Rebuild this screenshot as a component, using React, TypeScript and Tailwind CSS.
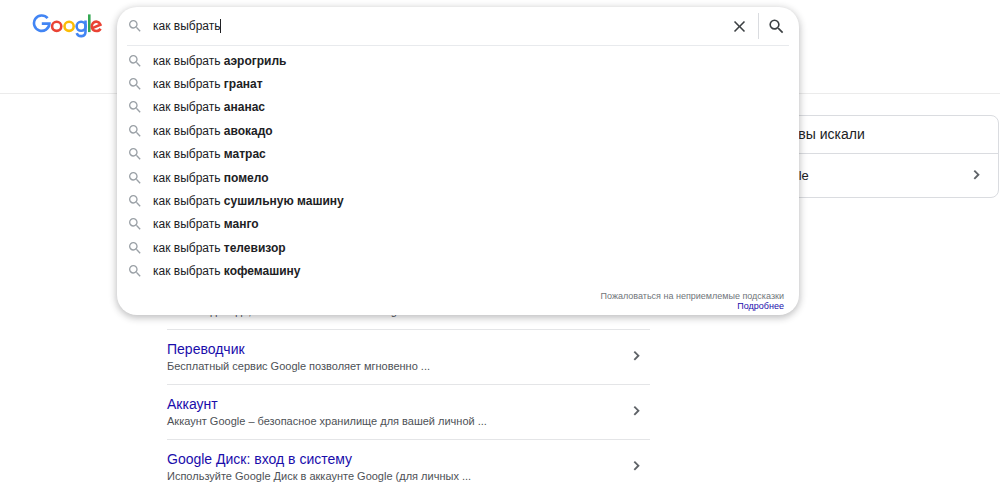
import React from "react";

const suggestions = [
  "аэрогриль",
  "гранат",
  "ананас",
  "авокадо",
  "матрас",
  "помело",
  "сушильную машину",
  "манго",
  "телевизор",
  "кофемашину",
];

const siteLinks = [
  { title: "Погода", text: "Вся погода года, новости и все места в Google ..." },
  { title: "Переводчик", text: "Бесплатный сервис Google позволяет мгновенно ..." },
  { title: "Аккаунт", text: "Аккаунт Google – безопасное хранилище для вашей личной ..." },
  { title: "Google Диск: вход в систему", text: "Используйте Google Диск в аккаунте Google (для личных ..." },
];

function SearchIcon({ className }: { className: string }) {
  return (
    <svg viewBox="0 0 24 24" className={className} fill="currentColor" aria-hidden="true">
      <path d="M15.5 14h-.79l-.28-.27A6.47 6.47 0 0 0 16 9.5 6.5 6.5 0 1 0 9.5 16c1.61 0 3.09-.59 4.23-1.57l.27.28v.79l5 4.99L20.49 19l-4.99-5zm-6 0C7.01 14 5 11.99 5 9.5S7.01 5 9.5 5 14 7.01 14 9.5 11.99 14 9.5 14z" />
    </svg>
  );
}

function CloseIcon() {
  return (
    <svg viewBox="0 0 24 24" className="size-[19px]" fill="currentColor" aria-hidden="true">
      <path d="M19 6.41L17.59 5 12 10.59 6.41 5 5 6.41 10.59 12 5 17.59 6.41 19 12 13.41 17.59 19 19 17.59 13.41 12z" />
    </svg>
  );
}

function Chevron() {
  return (
    <svg viewBox="0 0 18 18" className="size-[18px] shrink-0 text-[#5f6368]" fill="none" stroke="currentColor" strokeWidth="1.9" aria-hidden="true">
      <path d="M6.3 3.6 10.4 7.7 6.3 11.8" />
    </svg>
  );
}

function Logo() {
  return (
    <svg viewBox="0 0 70 24" className="h-6 w-[70px]" fill="none" strokeWidth="2.6" role="img" aria-label="Google">
      <path d="M15.6 4.2A7.7 7.7 0 1 0 17.4 9.6H9.8" stroke="#4285f4" />
      <circle cx="24.7" cy="12.3" r="4.6" stroke="#ea4335" />
      <circle cx="37.1" cy="12.3" r="4.6" stroke="#fbbc05" />
      <path d="M53.5 6.6v10.8c0 6-7.2 6-8.8 1.7" stroke="#4285f4" />
      <circle cx="49.1" cy="12.3" r="4.5" stroke="#4285f4" />
      <path d="M57.3 0.4v17.7" stroke="#34a853" />
      <path d="M60.3 14.1l8.1-3.4c-1.3-3.6-5.3-4-7.4-1.5-2.2 2.7-1.3 7.8 3.4 7.8 2.1 0 3.4-1 4.2-2.3" stroke="#ea4335" />
    </svg>
  );
}

export default function App() {
  return (
    <div className="relative min-h-screen bg-white font-['Liberation_Sans',Arial,sans-serif] text-[#202124]">
      <header className="flex h-[94px] items-start border-b border-[#ebebeb] pt-[14px] pl-8">
        <a href="#" aria-label="Google">
          <Logo />
        </a>
      </header>

      <main className="flex items-start pt-[21px] pr-px pl-[167px]">
        <section className="w-[483px] shrink-0 pt-40">
          <ul>
            {siteLinks.map((link) => (
              <li key={link.title} className="flex h-[55px] items-center justify-between border-b border-[#e4e5e7] pr-1">
                <div>
                  <a href="#" className="block text-sm leading-[18px] text-[#1a0dab]">{link.title}</a>
                  <p className="text-[11px] leading-4 text-[#4d5156]">{link.text}</p>
                </div>
                <Chevron />
              </li>
            ))}
          </ul>
        </section>

        <aside className="ml-[60px] flex-1 rounded-lg border border-[#dadce0]">
          <h2 className="border-b border-[#dadce0] px-[14px] text-sm leading-[37px]">Возможно, вы искали</h2>
          <a href="#" className="flex h-[43px] items-center justify-between pr-3 pl-2 text-[13px]">
            поиск в Google
            <Chevron />
          </a>
        </aside>
      </main>

      <form
        role="search"
        onSubmit={(e) => e.preventDefault()}
        className="absolute top-[7px] left-[117px] w-[682px] rounded-[20px] bg-white shadow-[0_2px_7px_1px_rgba(32,33,36,0.28)]"
      >
        <div className="mx-[10px] flex h-[39px] items-center border-b border-[#e8eaed]">
          <SearchIcon className="size-4 shrink-0 text-[#9aa0a6]" />
          <input
            type="text"
            aria-label="Поиск"
            defaultValue="как выбрать"
            className="ml-[10px] field-sizing-content min-w-0 bg-transparent text-xs caret-transparent outline-none"
          />
          <span className="h-[14px] w-px bg-[#202124]" aria-hidden="true" />
          <button type="button" aria-label="Очистить" className="mr-[9px] ml-auto text-[#3c4043]">
            <CloseIcon />
          </button>
          <button type="submit" aria-label="Найти" className="flex h-[26px] items-center border-l border-[#dadce0] pr-[3px] pl-2 text-[#3c4043]">
            <SearchIcon className="size-[19px]" />
          </button>
        </div>
        <ul className="mt-[3px] grid min-h-[234px] auto-rows-fr">
          {suggestions.map((word) => (
            <li key={word} className="flex items-center gap-[10px] px-[10px] text-xs leading-5">
              <SearchIcon className="size-4 shrink-0 text-[#9aa0a6]" />
              <span>
                как выбрать <b>{word}</b>
              </span>
            </li>
          ))}
        </ul>
        <div className="flex flex-col items-end pt-2 pr-[15px] pb-1 text-[9px] leading-[10px] text-[#70757a]">
          <a href="#">Пожаловаться на неприемлемые подсказки</a>
          <a href="#" className="text-[#1a0dab]">Подробнее</a>
        </div>
      </form>
    </div>
  );
}
